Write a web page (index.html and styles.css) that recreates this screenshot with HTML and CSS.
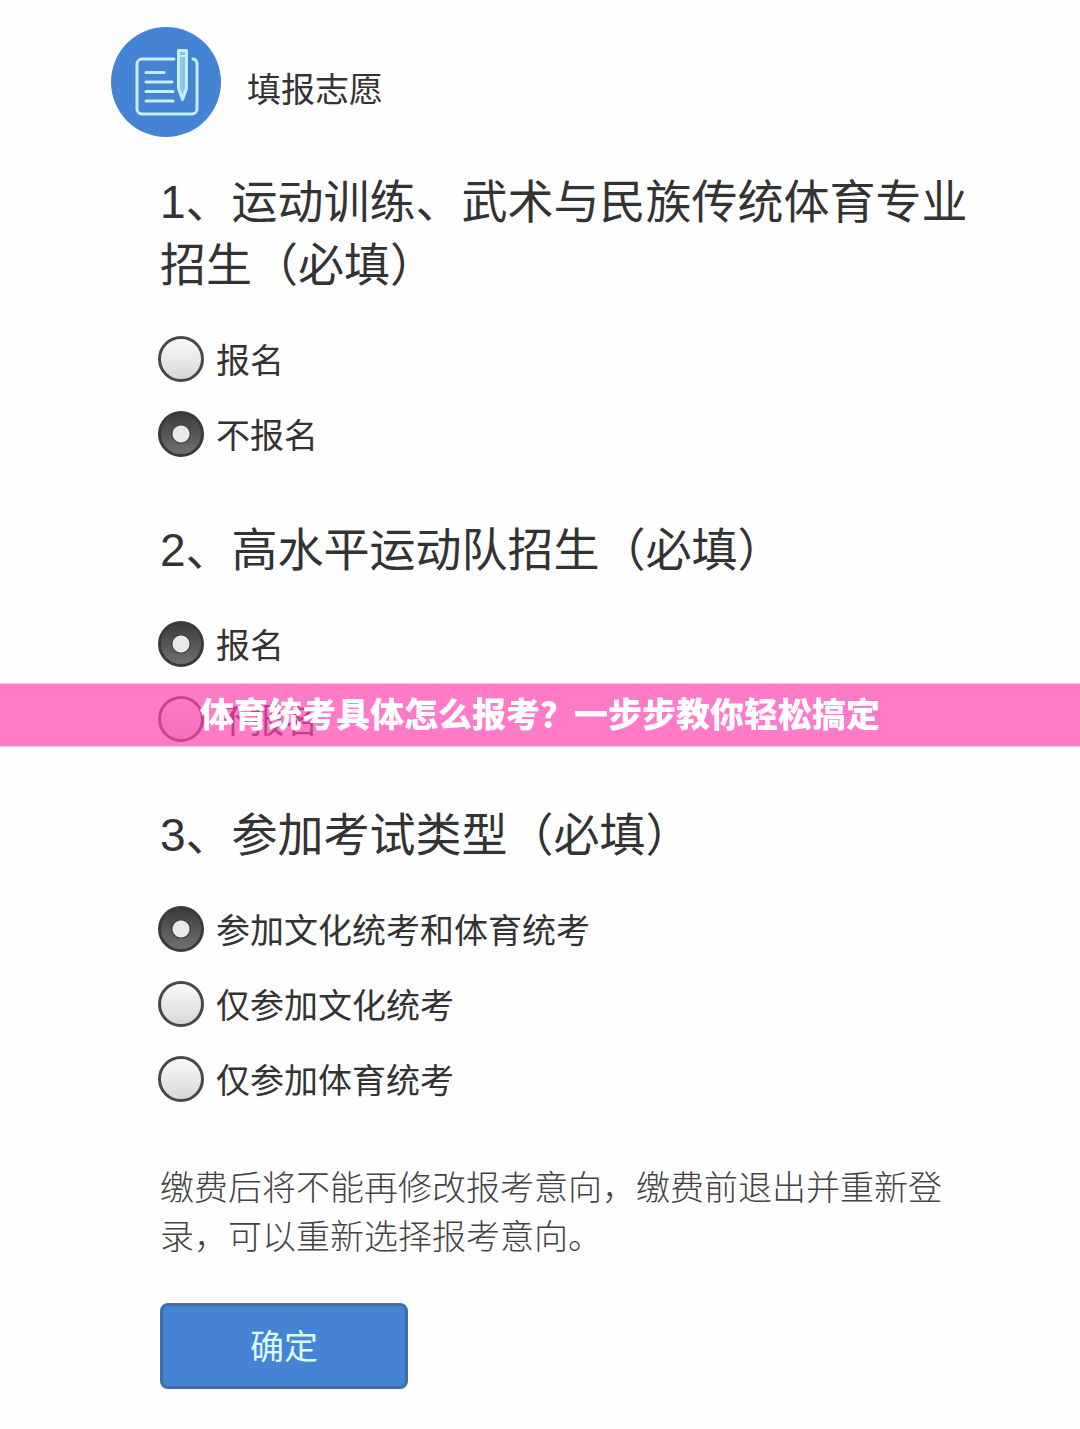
FILE: index.html
```html
<!DOCTYPE html>
<html lang="zh-CN">
<head>
    <meta charset="UTF-8">
    <meta name="viewport" content="width=device-width, initial-scale=1.0">
    <title>填报志愿</title>
    <link rel="stylesheet" href="styles.css">
</head>
<body>
    <header class="page-header">
        <svg class="logo" viewBox="0 0 110 110" aria-hidden="true">
            <circle cx="55" cy="55" r="55" fill="#4583d5"/>
            <g fill="none" stroke="#c3f0fb" stroke-width="3" stroke-linecap="round" stroke-linejoin="round">
                <path d="M63 32H31a5 5 0 0 0-5 5v45a5 5 0 0 0 5 5h50a5 5 0 0 0 5-5V37a5 5 0 0 0-4-5"/>
                <path d="M35 45.500H53M35 55H61M35 64.500H62M35 74H62"/>
                <path d="M67.500 23.500h8v38l-4 11-4-11z" fill="#8fc3ee"/>
                <path d="M67.500 29h8" stroke-width="2"/>
            </g>
        </svg>
        <h1>填报志愿</h1>
    </header>

    <form class="container">
        <fieldset class="question">
            <legend>1、运动训练、武术与民族传统体育专业招生（必填）</legend>
            <label class="option"><input type="radio" name="single" value="1"> 报名</label>
            <label class="option"><input type="radio" name="single" value="0" checked> 不报名</label>
        </fieldset>

        <fieldset class="question">
            <legend>2、高水平运动队招生（必填）</legend>
            <label class="option"><input type="radio" name="team" value="1" checked> 报名</label>
            <label class="option"><input type="radio" name="team" value="0"> 不报名</label>
        </fieldset>

        <fieldset class="question">
            <legend>3、参加考试类型（必填）</legend>
            <label class="option"><input type="radio" name="exam" value="all" checked> 参加文化统考和体育统考</label>
            <label class="option"><input type="radio" name="exam" value="culture"> 仅参加文化统考</label>
            <label class="option"><input type="radio" name="exam" value="sport"> 仅参加体育统考</label>
        </fieldset>

        <p class="note">缴费后将不能再修改报考意向，缴费前退出并重新登录，可以重新选择报考意向。</p>
        <button type="button" class="btn">确定</button>
    </form>

    <div class="banner">体育统考具体怎么报考？一步步教你轻松搞定</div>
</body>
</html>
```

FILE: styles.css
```css
* {
    box-sizing: border-box;
}
body {
    margin: 0;
    background-color: #fefefe;
    color: #333;
    font-family: "Liberation Sans", "Noto Sans CJK SC", sans-serif;
    font-size: 34px;
}
.page-header {
    display: flex;
    align-items: center;
    gap: 26px;
    padding: 27px 111px 0;
}
.logo {
    width: 110px;
    height: 110px;
}
.page-header h1 {
    margin: 0;
    padding-top: 10px;
    font-size: 34px;
    font-weight: normal;
}
.container {
    padding: 34px 108px 40px 160px;
}
.question {
    margin: 0 0 48px;
    padding: 0;
    border: none;
    min-width: 0;
}
.question legend {
    padding: 0;
    margin-bottom: 24px;
    font-size: 46px;
    line-height: 63px;
}
.option {
    display: flex;
    align-items: center;
    gap: 12px;
    height: 75px;
    margin-left: -2px;
}
.option input {
    appearance: none;
    width: 46px;
    height: 46px;
    margin: 0;
    border: 3px solid #484848;
    border-radius: 50%;
    background: linear-gradient(#fafafa, #d8d8d8);
}
.option input:checked {
    border-color: #3a3a3a;
    background: radial-gradient(circle, #e8e8e8 8px, #333 9px, transparent 10px), linear-gradient(#3c3c3c, #707070);
}
.note {
    margin: 0 0 41px;
    color: #444;
    font-weight: 300;
    line-height: 49px;
}
.btn {
    display: block;
    width: 248px;
    height: 86px;
    padding: 0 0 4px;
    border: 3px solid #416da8;
    border-radius: 8px;
    background-color: #4583d5;
    color: #dcfaff;
    font-family: inherit;
    font-size: 34px;
    cursor: pointer;
}
/* title strip lies over the middle of the page */
.banner {
    position: fixed;
    top: 50%;
    left: 0;
    right: 0;
    transform: translateY(-50%);
    padding-bottom: 6px;
    background-color: rgba(255, 65, 175, 0.7);
    color: white;
    font-family: "Noto Sans CJK SC", sans-serif;
    font-weight: 900;
    line-height: 57px;
    text-align: center;
}
```
